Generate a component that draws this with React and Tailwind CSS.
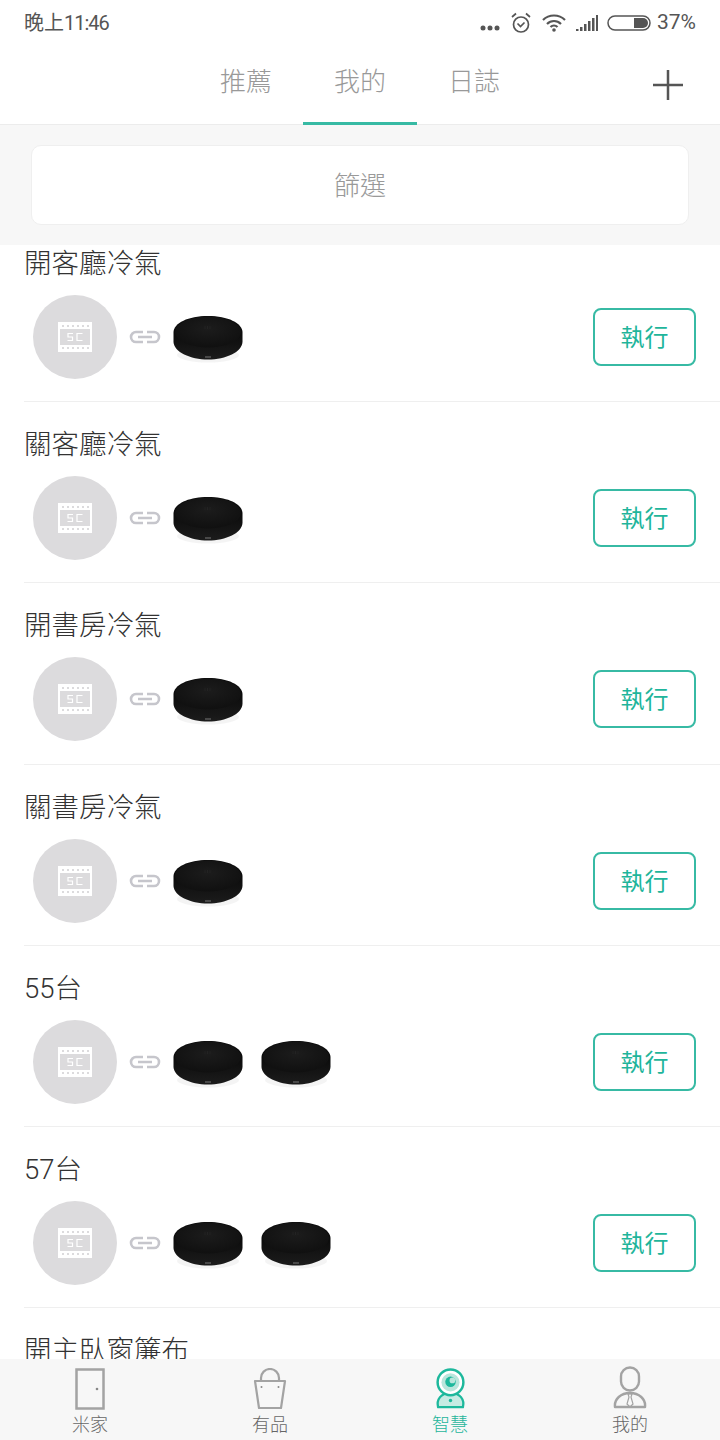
import React from "react";

const scenes=[
{name:"開客廳冷氣",pucks:1},
{name:"關客廳冷氣",pucks:1},
{name:"開書房冷氣",pucks:1},
{name:"關書房冷氣",pucks:1},
{name:"55台",pucks:2},
{name:"57台",pucks:2},
{name:"開主臥窗簾布",pucks:0}
]

function SceneIcon(){
return(
<div className="w-[84px] h-[84px] rounded-full bg-[#dcdbdd] flex items-center justify-center">
<svg width="34" height="30" viewBox="0 0 34 30">
<rect x="1" y="1" width="32" height="28" fill="none" stroke="#fff" strokeWidth="2"/>
<rect x="1" y="1" width="32" height="6" fill="#fff"/>
<rect x="1" y="23" width="32" height="6" fill="#fff"/>
{[4,9,14,19,24,29].map(x=>(
<g key={x} fill="#dcdbdd">
<rect x={x} y="3" width="2" height="2"/>
<rect x={x} y="25" width="2" height="2"/>
</g>
))}
<path d="M15 11.500h-5v3.500h4.500v3.500H9.500M24.500 11.500H19v7h5.500" fill="none" stroke="#fff" strokeWidth="1.200"/>
</svg>
</div>
)
}

function LinkIcon(){
return(
<svg width="32" height="14" viewBox="0 0 32 14" className="mx-[12px]">
<path d="M14 2H7a5 5 0 0 0 0 10h7M18 2h7a5 5 0 0 1 0 10h-7M9 7h14" fill="none" stroke="#c6c6cc" strokeWidth="2.600"/>
</svg>
)
}

function Puck({id}){
return(
<svg width="70" height="54" viewBox="0 0 70 54">
<defs>
<radialGradient id={`top${id}`} cx="0.5" cy="0.4" r="0.6">
<stop offset="0" stopColor="#1c1c1c"/>
<stop offset="1" stopColor="#101010"/>
</radialGradient>
<linearGradient id={`side${id}`} x1="0" y1="0" x2="0" y2="1">
<stop offset="0.4" stopColor="#0c0c0c"/>
<stop offset="1" stopColor="#1c1c1c"/>
</linearGradient>
</defs>
<ellipse cx="35" cy="45" rx="31" ry="7.500" fill="#dcdcdc" opacity="0.3"/>
<path d="M35 6C55 6 69 13 69.500 22V32C69 42 53 49.500 35 49.500S1 42 .5 32V22C1 13 15 6 35 6z" fill={`url(#side${id})`}/>
<ellipse cx="35" cy="22" rx="33" ry="15.500" fill={`url(#top${id})`}/>
<path d="M32 16v3M34.500 16v3M37 16v3" stroke="#262626" strokeWidth="0.700"/>
<rect x="32" y="46.500" width="6" height="1" fill="#777"/>
</svg>
)
}

function SceneRow({scene,index}){
return(
<div className="h-[181.2px] border-b border-[#efefef] ml-[24px] shrink-0">
<div className="h-[87px] pt-[25px] text-[27.500px] leading-[36px] font-light text-[#333]">
{scene.name}
</div>
{scene.pucks>0 && (
<div className="flex items-center h-[58px] pl-[9px] pr-[24px]">
<SceneIcon/>
<LinkIcon/>
<Puck id={`${index}a`}/>
{scene.pucks>1 && (
<div className="ml-[18px]">
<Puck id={`${index}b`}/>
</div>
)}
<button className="ml-auto w-[103px] h-[58px] pt-[2px] rounded-[8px] border-2 border-[#37baa4] text-[#1fb59b] text-[24px]">
執行
</button>
</div>
)}
</div>
)
}

function DoorIcon(){
return(
<svg width="30" height="42" viewBox="0 0 30 42">
<rect x="1.500" y="1.500" width="27" height="39" fill="none" stroke="#a3a3a3" strokeWidth="2.500"/>
<circle cx="22" cy="21" r="1.300" fill="#888"/>
</svg>
)
}

function BagIcon(){
return(
<svg width="34" height="42" viewBox="0 0 34 42">
<path d="M2 13h30l-4 27H6z" fill="none" stroke="#a3a3a3" strokeWidth="2.200" strokeLinejoin="round"/>
<path d="M8 13V10a9 9 0 0 1 18 0v3" fill="none" stroke="#a3a3a3" strokeWidth="2.200"/>
<circle cx="8.500" cy="19" r="1" fill="#888"/>
<circle cx="25.500" cy="19" r="1" fill="#888"/>
</svg>
)
}

function CameraIcon(){
return(
<svg width="31" height="42" viewBox="0 0 32 44">
<path d="M3 41c-2-8 3-15 13-15s15 7 13 15z" fill="#c6ebe3" stroke="#1db89c" strokeWidth="2.400" strokeLinejoin="round"/>
<circle cx="16" cy="15" r="13.500" fill="#fff" stroke="#1db89c" strokeWidth="2.600"/>
<circle cx="16" cy="15" r="9.500" fill="#b9e6dc"/>
<circle cx="16" cy="14.500" r="5.500" fill="#1db89c"/>
<circle cx="18" cy="13" r="3" fill="#b9e6dc"/>
<circle cx="16" cy="34" r="1.800" fill="#1db89c"/>
</svg>
)
}

function PersonIcon(){
return(
<svg width="34" height="44" viewBox="0 0 34 44">
<rect x="8" y="1.500" width="18" height="23" rx="9" fill="none" stroke="#a3a3a3" strokeWidth="2.400"/>
<path d="M2 41c-1-8 6-14 15-14s16 6 15 14z" fill="none" stroke="#a3a3a3" strokeWidth="2.400" strokeLinejoin="round"/>
<path d="M15 28h4l-1 3 2 7-3 3-3-3 2-7z" fill="none" stroke="#a3a3a3" strokeWidth="1.200"/>
</svg>
)
}

function NavItem({icon,label,active}){
return(
<div className="flex-1 flex flex-col items-center">
<div className="h-[44px] flex items-end">{icon}</div>
<span className={`text-[18px] leading-[24px] mt-[3px] font-light ${active?"text-[#1fb59b]":"text-[#666]"}`}>
{label}
</span>
</div>
)
}

export default function App(){

return(

<div className="w-[720px] h-[1440px] flex flex-col overflow-hidden bg-white font-['Roboto','Noto_Sans_CJK_TC',sans-serif]">

<div className="h-[46px] shrink-0 flex items-center justify-between pl-[24px] pr-[24px] text-[20px] text-[#555]">
<span>晚上<span className="tracking-[-1px]">11:46</span></span>
<div className="flex items-center">
<svg width="20" height="6" viewBox="0 0 20 6" className="mt-[9px]">
<circle cx="3" cy="3" r="2.500" fill="#555"/>
<circle cx="10" cy="3" r="2.500" fill="#555"/>
<circle cx="17" cy="3" r="2.500" fill="#555"/>
</svg>
<svg width="22" height="22" viewBox="0 0 22 22" className="ml-[10px]">
<circle cx="11" cy="12.500" r="7.500" fill="none" stroke="#555" strokeWidth="1.700"/>
<path d="M7.500 11.500l3 3 4-4M2 5l4-3.500M20 5l-4-3.500" fill="none" stroke="#555" strokeWidth="1.700"/>
</svg>
<svg width="24" height="18" viewBox="0 0 24 18" className="ml-[10px]">
<path d="M1 6c6-6 16-6 22 0M5 10c4-4 10-4 14 0M8.500 13c2-2 5-2 7 0" fill="none" stroke="#555" strokeWidth="2.200"/>
<circle cx="12" cy="16" r="1.800" fill="#555"/>
</svg>
<svg width="22" height="16" viewBox="0 0 22 16" className="ml-[10px]">
<rect x="0" y="14" width="2.500" height="2" fill="#555"/>
<rect x="4" y="12" width="2.500" height="4" fill="#555"/>
<rect x="8" y="9" width="2.500" height="7" fill="#555"/>
<rect x="12" y="6" width="2.500" height="10" fill="#555"/>
<rect x="16" y="3" width="2.500" height="13" fill="#555"/>
<rect x="20" y="0" width="2" height="16" fill="#555"/>
</svg>
<svg width="44" height="16" viewBox="0 0 44 16" className="ml-[9px]">
<rect x="1" y="1" width="42" height="14" rx="7" fill="none" stroke="#555" strokeWidth="1.500"/>
<path d="M27 3h9a5 5 0 0 1 0 10h-9z" fill="#555"/>
</svg>
<span className="ml-[6px] text-[21px]">37%</span>
</div>
</div>

<div className="h-[79px] shrink-0 flex items-stretch justify-center relative border-b border-[#ececec] text-[26px] font-light text-[#999]">
<div className="w-[114px] text-center pt-[17px]">推薦</div>
<div className="w-[114px] text-center pt-[17px] border-b-[3px] border-[#37baa4] -mb-px">我的</div>
<div className="w-[114px] text-center pt-[17px]">日誌</div>
<svg width="30" height="30" viewBox="0 0 30 30" className="absolute right-[37px] top-[24px]">
<path d="M15 0v30M0 15h30" stroke="#555" strokeWidth="2.500"/>
</svg>
</div>

<div className="h-[120px] shrink-0 bg-[#f7f7f7] px-[31px] pt-[20px]">
<div className="h-[80px] pt-[2px] bg-white rounded-[10px] border border-[#efefef] flex items-center justify-center text-[26px] font-light text-[#999]">
篩選
</div>
</div>

<div className="flex-1 overflow-hidden relative z-0">
<div className="-mt-[24px]">
{scenes.map((scene,index)=>(
<SceneRow key={index} scene={scene} index={index}/>
))}
</div>
</div>

<div className="h-[81px] shrink-0 bg-[#f7f7f7] flex pt-[7px] relative z-10">
<NavItem icon={<DoorIcon/>} label="米家"/>
<NavItem icon={<BagIcon/>} label="有品"/>
<NavItem icon={<CameraIcon/>} label="智慧" active/>
<NavItem icon={<PersonIcon/>} label="我的"/>
</div>

</div>

)

}
